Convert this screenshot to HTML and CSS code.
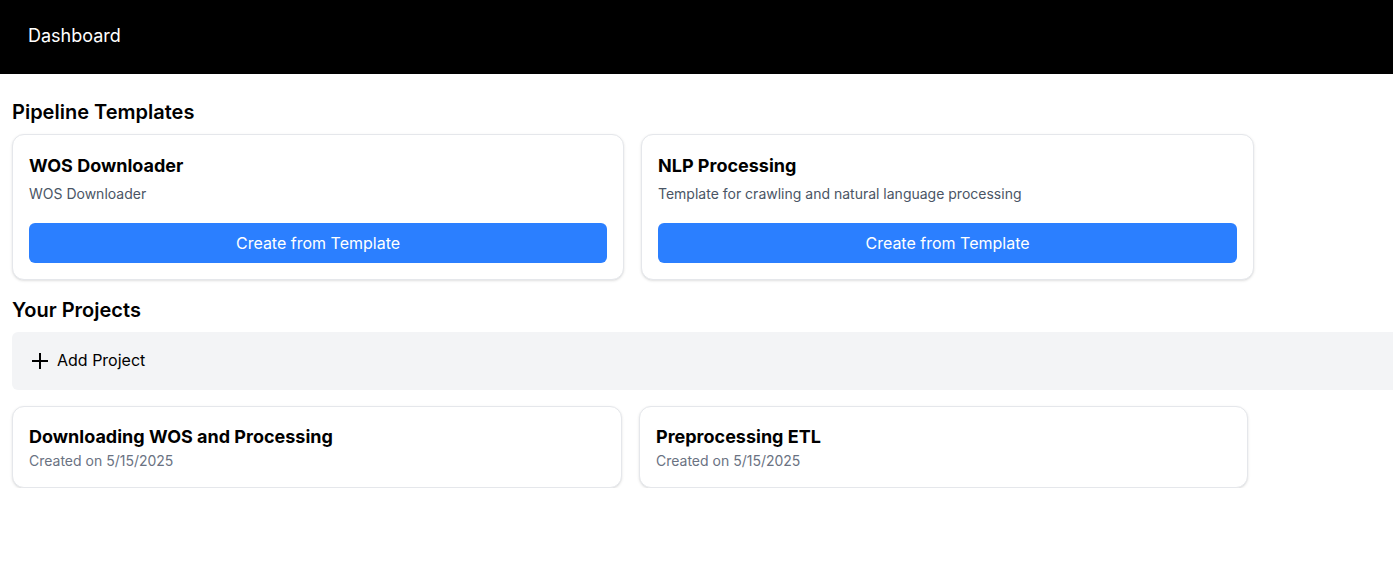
FILE: index.html
```html
<!DOCTYPE html>
<html lang="en">
<head>
<meta charset="utf-8">
<title>Dashboard</title>
<link rel="stylesheet" href="styles.css">
</head>
<body>
<header class="topbar">
  <span class="brand">Dashboard</span>
</header>
<main class="main">
  <h2 class="section-title">Pipeline Templates</h2>
  <div class="template-grid">
    <div class="card">
      <h3 class="card-title template-title">WOS Downloader</h3>
      <p class="card-desc">WOS Downloader</p>
      <button class="btn-primary">Create from Template</button>
    </div>
    <div class="card">
      <h3 class="card-title template-title">NLP Processing</h3>
      <p class="card-desc">Template for crawling and natural language processing</p>
      <button class="btn-primary">Create from Template</button>
    </div>
  </div>
  <h2 class="section-title projects-title">Your Projects</h2>
  <button class="add-bar">
    <svg class="plus" width="24" height="24" viewBox="0 0 24 24" fill="none" stroke="currentColor" stroke-width="2" stroke-linecap="square"><path d="M5 12h14"/><path d="M12 5v14"/></svg>
    <span>Add Project</span>
  </button>
  <div class="project-grid">
    <div class="card">
      <h3 class="card-title">Downloading WOS and Processing</h3>
      <p class="card-meta">Created on 5/15/2025</p>
    </div>
    <div class="card">
      <h3 class="card-title">Preprocessing ETL</h3>
      <p class="card-meta">Created on 5/15/2025</p>
    </div>
  </div>
</main>
</body>
</html>
```
FILE: styles.css
```css
* { box-sizing: border-box; }
html, body { margin: 0; padding: 0; background: #fff; overflow: hidden; }
body {
  font-family: Inter, "Noto Sans", "Liberation Sans", sans-serif;
  color: #000;
}
.topbar {
  height: 74px;
  background: #000;
  display: flex;
  align-items: center;
  padding: 0 28px 3px;
}
.brand {
  color: #fff;
  font-size: 18px;
  line-height: 28px;
}
.main {
  padding: 24px 0 0 12px;
}
.section-title {
  margin: 0 0 8px;
  font-size: 20px;
  line-height: 28px;
  font-weight: 600;
}
.projects-title { margin-top: 16px; }
.template-grid {
  display: grid;
  grid-template-columns: 612px 613px;
  column-gap: 17px;
}
.project-grid {
  display: grid;
  grid-template-columns: 610px 609px;
  column-gap: 17px;
  margin-top: 16px;
}
.card {
  background: #fff;
  border: 1px solid #e5e7eb;
  border-radius: 12px;
  padding: 16px;
  box-shadow: 0 1px 3px rgba(0,0,0,0.1), 0 1px 2px -1px rgba(0,0,0,0.1);
}
.card-title {
  margin: 0;
  font-size: 18px;
  line-height: 28px;
  font-weight: 700;
}
.template-title { padding-top: 1px; }
.card-desc {
  margin: 4px 0 0;
  font-size: 14px;
  line-height: 20px;
  color: #4a5565;
}
.card-meta {
  margin: 0;
  font-size: 14px;
  line-height: 20px;
  color: #6a7282;
}
.btn-primary {
  display: block;
  width: 100%;
  margin-top: 19px;
  height: 40px;
  border: 0;
  border-radius: 6px;
  background: #2b7fff;
  color: #fff;
  font-family: inherit;
  font-size: 16px;
  line-height: 24px;
}
.add-bar {
  display: flex;
  align-items: center;
  gap: 5px;
  width: 100%;
  height: 58px;
  padding: 0 16px 2px;
  border: 0;
  border-radius: 6px 0 0 6px;
  background: #f3f4f6;
  color: #000;
  font-family: inherit;
  font-size: 16px;
  line-height: 24px;
  text-align: left;
}
.plus { flex: none; margin-top: 2px; }
```
